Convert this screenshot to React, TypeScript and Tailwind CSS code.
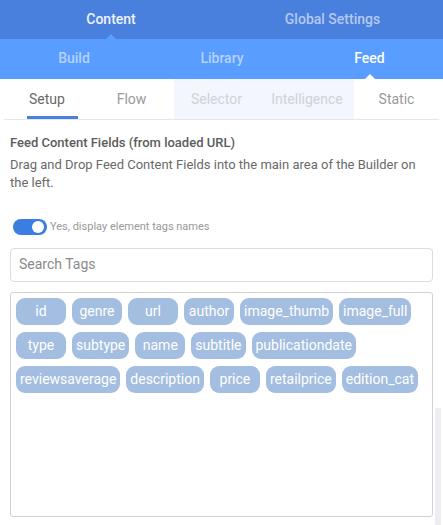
import React from 'react'

const FONT = { fontFamily: 'Roboto, "Liberation Sans", sans-serif' }

const TAG_ROWS = [
  ['id', 'genre', 'url', 'author', 'image_thumb', 'image_full'],
  ['type', 'subtype', 'name', 'subtitle', 'publicationdate'],
  ['reviewsaverage', 'description', 'price', 'retailprice', 'edition_cat'],
]

function Caret({ color }: { color: string }) {
  return (
    <svg width="10" height="5" viewBox="0 0 10 5" className="absolute bottom-0 left-1/2 -translate-x-1/2">
      <polygon points="0,5 5,0 10,5" fill={color} />
    </svg>
  )
}

export default function App() {
  return (
    <div className="relative w-[443px] h-[525px] overflow-hidden bg-white" style={FONT}>
      {/* main tabs */}
      <div className="flex h-[39px] bg-[#4a80dd] text-[14px]">
        <div className="relative flex w-[222px] items-center justify-center font-medium text-[#eef3ff]">
          Content
          <Caret color="#589dff" />
        </div>
        <div className="flex w-[221px] items-center justify-center font-medium text-[#b4c9f1]">Global Settings</div>
      </div>

      {/* sub tabs */}
      <div className="flex h-[40px] bg-[#589dff] text-[14px] font-medium">
        <div className="flex w-[148px] items-center justify-center pb-px text-[#b7d2ff]">Build</div>
        <div className="flex w-[148px] items-center justify-center pb-px text-[#b7d2ff]">Library</div>
        <div className="relative flex w-[147px] items-center justify-center pb-px text-white">
          Feed
          <Caret color="#ffffff" />
        </div>
      </div>

      {/* feed tabs */}
      <div className="mx-[4px] flex h-[41px] border-b border-[#e4e7ee] text-[14px]">
        <div className="ml-[23px] flex w-[51px] items-center border-b-[3px] border-[#4a80dd] pl-[2px] pt-[3px] text-[#6a6a6a]">Setup</div>
        <div className="flex w-[96px] items-center justify-center pl-[11px] text-[#9a9a9a]">Flow</div>
        <div className="flex w-[180px] bg-[#f3f6fd] text-[#cfd2d8]">
          <div className="flex w-[90px] items-center justify-center pr-[5px]">Selector</div>
          <div className="flex w-[90px] items-center justify-center pr-[4px]">Intelligence</div>
        </div>
        <div className="flex flex-1 items-center justify-center text-[#9a9a9a]">Static</div>
      </div>

      {/* body */}
      <div className="px-[10px] pt-[14px]">
        <div className="text-[13px] font-medium leading-[18px] text-[#5c5c5c]">Feed Content Fields (from loaded URL)</div>
        <p className="mt-[4px] text-[13px] leading-[18px] text-[#6a6a6a]">
          Drag and Drop Feed Content Fields into the main area of the Builder on the left.
        </p>

        <div className="mt-[27px] flex items-center pl-[3px]">
          <div className="flex h-[16px] w-[34px] items-center justify-end rounded-full bg-[#3b7de0] pr-[3px]">
            <div className="h-[12px] w-[12px] rounded-full bg-white" />
          </div>
          <span className="ml-[3px] text-[11px] text-[#999]">Yes, display element tags names</span>
        </div>

        <div className="mt-[12px] flex h-[34px] w-[423px] items-center rounded-[4px] border border-[#d8dce5] px-[8px] text-[14px] text-[#8a8a8a]">
          Search Tags
        </div>

        <div className="mt-[10px] flex h-[225px] w-[423px] flex-col gap-[7px] rounded-[3px] border border-[#d2d2d2] p-[5px]">
          {TAG_ROWS.map((row, i) => (
            <div key={i} className="flex gap-[6px]">
              {row.map(t => (
                <span
                  key={t}
                  className="flex h-[27px] min-w-[50px] items-center justify-center rounded-[9px] bg-[#a3bee0] px-[4px] text-[14px] text-white"
                >
                  {t}
                </span>
              ))}
            </div>
          ))}
        </div>
      </div>

      {/* scrollbar */}
      <div className="absolute right-[2px] top-[408px] h-[117px] w-[6px] bg-[#eceef4]" />
    </div>
  )
}
